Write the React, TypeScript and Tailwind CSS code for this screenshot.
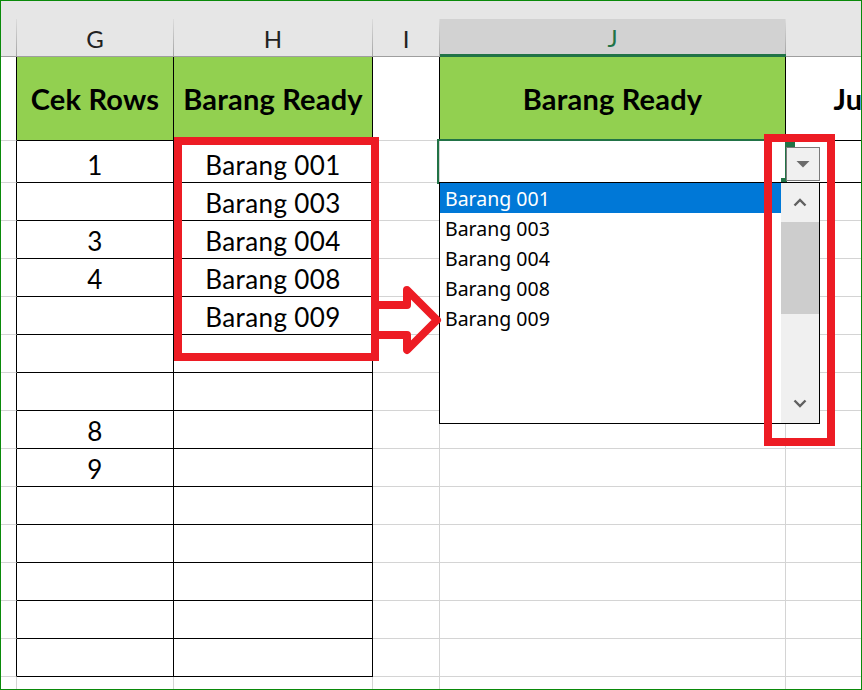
import React from 'react';

type Row = { g: string; h: string };

const dataRows: Row[] = [
  { g: '1', h: 'Barang 001' },
  { g: '', h: 'Barang 003' },
  { g: '3', h: 'Barang 004' },
  { g: '4', h: 'Barang 008' },
  { g: '', h: 'Barang 009' },
  { g: '', h: '' },
  { g: '', h: '' },
  { g: '8', h: '' },
  { g: '9', h: '' },
  { g: '', h: '' },
  { g: '', h: '' },
  { g: '', h: '' },
  { g: '', h: '' },
  { g: '', h: '' },
];

const listItems = ['Barang 001', 'Barang 003', 'Barang 004', 'Barang 008', 'Barang 009'];

function HeadCell({ w, label, active }: { w: string; label: string; active?: boolean }) {
  return (
    <div
      className={`${w} shrink-0 flex ${
        active ? 'bg-[#d2d2d2] border-b-[3px] border-b-[#217346]' : 'bg-[#e6e6e6] border-b border-b-[#9e9e9e]'
      }`}
    >
      <div
        className={`flex-1 flex items-center justify-center pt-[3px] text-[24px] leading-[24px] ${
          active ? 'text-[#217346]' : 'text-[#222]'
        }`}
      >
        {label}
      </div>
      <div className="w-px bg-linear-to-b from-[#dcdcdc] to-[#a4a4a4]" />
    </div>
  );
}

function BodyRow({ row, height, index }: { row: Row; height: string; index: number }) {
  const inTable = index >= 0;
  const kBlack = index === 0;
  const value = 'flex items-end justify-center pb-[4px] text-[26px] leading-[26px] tracking-[0.4px] text-black';
  return (
    <div className={`flex ${height}`}>
      <div
        className={`w-[16px] shrink-0 border-r border-b border-b-[#d4d4d4] ${
          inTable ? 'border-r-black' : 'border-r-[#d4d4d4]'
        }`}
      />
      <div
        className={`w-[157px] shrink-0 border-r border-b ${
          inTable ? 'border-r-black border-b-black' : 'border-r-[#d4d4d4] border-b-[#d4d4d4]'
        } ${value}`}
      >
        {row.g}
      </div>
      <div
        className={`w-[199px] shrink-0 border-r border-b ${
          inTable ? 'border-r-black border-b-black' : 'border-r-[#d4d4d4] border-b-[#d4d4d4]'
        } ${value}`}
      >
        {row.h}
      </div>
      <div className="w-[67px] shrink-0 border-r border-b border-r-[#d4d4d4] border-b-[#d4d4d4]" />
      <div
        className={`w-[346px] shrink-0 border-r border-b border-b-[#d4d4d4] ${
          index === 0 ? 'border-r-black' : 'border-r-[#d4d4d4]'
        }`}
      />
      <div
        className={`w-[188px] shrink-0 border-r border-b border-r-[#d4d4d4] ${
          kBlack ? 'border-b-black' : 'border-b-[#d4d4d4]'
        }`}
      />
    </div>
  );
}

function TitleRow() {
  const title =
    'flex items-center justify-center pt-[0px] text-[29px] leading-[29px] tracking-[0.2px] font-bold text-black';
  return (
    <div className="flex h-[84px]">
      <div className="w-[16px] shrink-0 border-r border-b border-r-black border-b-[#d4d4d4]" />
      <div className={`w-[157px] shrink-0 bg-[#92d050] border-r border-b border-r-black border-b-black ${title}`}>
        Cek Rows
      </div>
      <div className={`w-[199px] shrink-0 bg-[#92d050] border-r border-b border-r-black border-b-black ${title}`}>
        Barang Ready
      </div>
      <div className="w-[67px] shrink-0 border-r border-b border-r-black border-b-[#d4d4d4]" />
      <div className={`w-[346px] shrink-0 bg-[#92d050] border-r border-b border-r-black border-b-black ${title}`}>
        Barang Ready
      </div>
      <div className={`w-[188px] shrink-0 border-r border-b border-r-[#d4d4d4] border-b-black ${title}`}>
        Jumlah
      </div>
    </div>
  );
}

function Chevron({ up }: { up?: boolean }) {
  return (
    <svg width="14" height="9" viewBox="0 0 14 9">
      <polyline
        points={up ? '1.5,7.5 7,2 12.5,7.5' : '1.5,1.5 7,7 12.5,1.5'}
        fill="none"
        stroke="#606060"
        strokeWidth="2.4"
      />
    </svg>
  );
}

function DropList() {
  return (
    <div className="absolute left-[438px] top-[181px] w-[381px] h-[242px] border border-black bg-white flex font-['Noto_Sans',sans-serif]">
      <div className="w-[341px] flex flex-col">
        {listItems.map((item, i) => (
          <div
            key={item}
            className={`h-[30px] pl-[5px] pt-[1px] text-[19.5px] leading-[30px] ${
              i === 0 ? 'bg-[#0078d7] text-white' : 'text-black'
            }`}
          >
            {item}
          </div>
        ))}
      </div>
      <div className="w-[38px] bg-[#f0f0f0] flex flex-col">
        <div className="h-[39px] flex items-center justify-center">
          <Chevron up />
        </div>
        <div className="h-[92px] bg-[#cdcdcd]" />
        <div className="flex-1" />
        <div className="h-[39px] flex items-center justify-center">
          <Chevron />
        </div>
      </div>
    </div>
  );
}

export default function App() {
  return (
    <div className="relative w-[862px] h-[690px] overflow-hidden border border-[#0a8a0a] bg-white font-['Lato',sans-serif]">
      <div className="h-[18px] bg-[#e6e6e6]" />
      <div className="flex h-[38px]">
        <HeadCell w="w-[16px]" label="" />
        <HeadCell w="w-[157px]" label="G" />
        <HeadCell w="w-[199px]" label="H" />
        <HeadCell w="w-[67px]" label="I" />
        <HeadCell w="w-[346px]" label="J" active />
        <HeadCell w="w-[188px]" label="" />
      </div>
      <TitleRow />
      {dataRows.map((row, i) => (
        <BodyRow key={i} row={row} index={i} height={i === 0 ? 'h-[42px]' : 'h-[38px]'} />
      ))}
      <BodyRow row={{ g: '', h: '' }} index={-1} height="h-[38px]" />

      {/* selected cell J2 */}
      <div className="absolute left-[436px] top-[138px] w-[350px] h-[45px] border-2 border-[#217346]" />
      <div className="absolute left-[785px] top-[140px] w-[9px] h-[6px] bg-[#217346]" />
      <div className="absolute left-[780px] top-[177px] w-[6px] h-[5px] bg-[#217346]" />

      {/* dropdown button */}
      <div className="absolute left-[785px] top-[146px] w-[34px] h-[34px] border border-[#7a7a7a] bg-[#f0f0f0] flex items-center justify-center">
        <svg width="14" height="8" viewBox="0 0 14 8">
          <polygon points="0.5,1 13.5,1 7,7.5" fill="#6b6b6b" />
        </svg>
      </div>

      <DropList />

      {/* annotations */}
      <div className="absolute left-[173px] top-[136px] w-[205px] h-[224px] border-8 border-[#ed1c24]" />
      <div className="absolute left-[763px] top-[133px] w-[71px] h-[312px] border-8 border-[#ed1c24]" />
      <svg className="absolute left-[369px] top-[279px]" width="80" height="80" viewBox="0 0 80 80">
        <path
          d="M5 25 H37 V10 L67 40 L37 70 V55 H5"
          fill="none"
          stroke="#ed1c24"
          strokeWidth="8"
          strokeLinejoin="round"
        />
      </svg>
    </div>
  );
}
